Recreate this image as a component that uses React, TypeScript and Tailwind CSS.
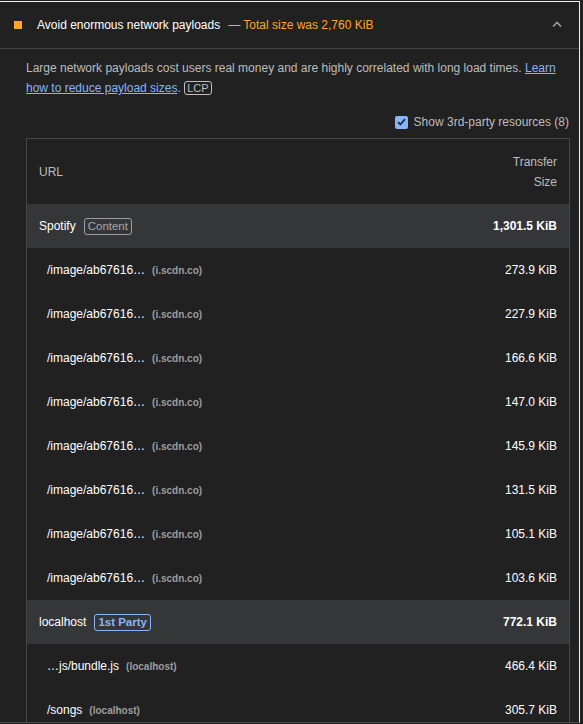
import { PropsWithChildren } from "react";

interface Row {
  url: string;
  host: string;
  size: string;
}

interface Group {
  name: string;
  badge: string;
  firstParty: boolean;
  total: string;
  rows: Row[];
}

const groups: Group[] = [
  {
    name: "Spotify",
    badge: "Content",
    firstParty: false,
    total: "1,301.5 KiB",
    rows: [
      { url: "/image/ab67616…", host: "(i.scdn.co)", size: "273.9 KiB" },
      { url: "/image/ab67616…", host: "(i.scdn.co)", size: "227.9 KiB" },
      { url: "/image/ab67616…", host: "(i.scdn.co)", size: "166.6 KiB" },
      { url: "/image/ab67616…", host: "(i.scdn.co)", size: "147.0 KiB" },
      { url: "/image/ab67616…", host: "(i.scdn.co)", size: "145.9 KiB" },
      { url: "/image/ab67616…", host: "(i.scdn.co)", size: "131.5 KiB" },
      { url: "/image/ab67616…", host: "(i.scdn.co)", size: "105.1 KiB" },
      { url: "/image/ab67616…", host: "(i.scdn.co)", size: "103.6 KiB" },
    ],
  },
  {
    name: "localhost",
    badge: "1st Party",
    firstParty: true,
    total: "772.1 KiB",
    rows: [
      { url: "…js/bundle.js", host: "(localhost)", size: "466.4 KiB" },
      { url: "/songs", host: "(localhost)", size: "305.7 KiB" },
    ],
  },
];

function Badge(props: PropsWithChildren<{ blue: boolean }>) {
  return (
    <span
      className={`ml-[8px] rounded-[3px] border px-[3px] text-[11.5px] leading-[15px] ${
        props.blue
          ? "border-[#8ab4f8] text-[#8ab4f8] font-bold"
          : "border-[#9e9e9e] text-[#a8a8a8]"
      }`}
    >
      {props.children}
    </span>
  );
}

export default function App() {
  return (
    <div
      className="h-[724px] w-[583px] overflow-hidden bg-[#212121] pt-[1px] text-[12px] text-[#e8e8e8]"
      style={{ fontFamily: '"Liberation Sans", Arial, sans-serif' }}
    >
      <div className="h-[722px] w-[580px] overflow-hidden border-t border-r border-b border-t-[#f0f0f0] border-r-[#f0f0f0] border-b-[#4a4a4a]">
        {/* header */}
        <div className="flex h-[47px] items-center border-b border-[#444444] pl-[14px] pr-[17px]">
          <span className="h-[8px] w-[8px] bg-[#ffa62b]" />
          <span className="ml-[15px] text-white">Avoid enormous network payloads</span>
          <span className="ml-[8px] text-[#ffa62b]">— Total size was 2,760 KiB</span>
          <svg className="ml-auto mt-[-2px]" width="10" height="6" viewBox="0 0 10 6">
            <path d="M1 5.5 L5 1.5 L9 5.5" fill="none" stroke="#9e9e9e" strokeWidth="1.6" />
          </svg>
        </div>

        <div className="pl-[26px] pr-[10px] pt-[9px]">
          <p className="leading-[20px] text-[#bdbdbd]">
            Large network payloads cost users real money and are highly correlated with long load
            times.{" "}
            <a className="text-[#8ab4f8] underline" href="#">
              Learn how to reduce payload sizes
            </a>
            .{" "}
            <span className="rounded-[3px] border border-[#bdbdbd] px-[2px] text-[11px] text-[#bdbdbd]">
              LCP
            </span>
          </p>

          <div className="mt-[15px] flex items-center justify-end">
            <span className="flex h-[13px] w-[13px] items-center justify-center rounded-[2px] bg-[#8ab4f8]">
              <svg width="9" height="8" viewBox="0 0 9 8">
                <path d="M1 4.2 L3.4 6.5 L8 1.2" fill="none" stroke="#1f2a3a" strokeWidth="1.8" />
              </svg>
            </span>
            <span className="ml-[6px] text-[#bdbdbd]">Show 3rd-party resources (8)</span>
          </div>

          {/* table */}
          <div className="mt-[7px] w-[544px] border-l border-r border-t border-[#474747]">
            <div className="flex h-[65px] items-center justify-between px-[12px] text-[#bdbdbd]">
              <span>URL</span>
              <span className="text-right leading-[20px]">
                Transfer
                <br />
                Size
              </span>
            </div>
            {groups.map((g) => (
              <div key={g.name}>
                <div className="flex h-[44px] items-center bg-[#353638] px-[12px]">
                  <span className="text-white">{g.name}</span>
                  <Badge blue={g.firstParty}>{g.badge}</Badge>
                  <span className="ml-auto font-bold text-white">{g.total}</span>
                </div>
                {g.rows.map((r, i) => (
                  <div key={i} className="flex h-[44px] items-center pl-[20px] pr-[12px]">
                    <span className="text-white">{r.url}</span>
                    <span className="ml-[7px] text-[10px] font-bold text-[#9e9e9e]">{r.host}</span>
                    <span className="ml-auto text-white">{r.size}</span>
                  </div>
                ))}
              </div>
            ))}
          </div>
        </div>
      </div>
    </div>
  );
}
